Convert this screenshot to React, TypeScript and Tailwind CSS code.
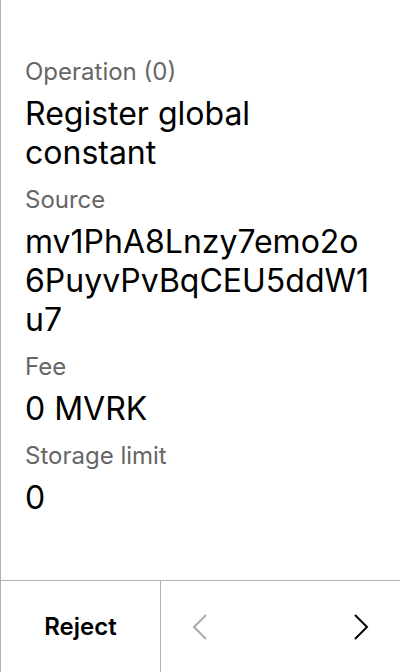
import React from "react";

const rows: { label: string; value: string }[] = [
  { label: "Operation (0)", value: "Register global constant" },
  { label: "Source", value: "mv1PhA8Lnzy7emo2o6PuyvPvBqCEU5ddW1u7" },
  { label: "Fee", value: "0 MVRK" },
  { label: "Storage limit", value: "0" },
];

const Chevron = ({ dir, className }: { dir: "left" | "right"; className: string }) => (
  <svg width="16" height="26" viewBox="0 0 16 26" fill="none" className={className}>
    <polyline
      points={dir === "left" ? "14,1 2,13 14,25" : "2,1 14,13 2,25"}
      stroke="currentColor"
      strokeWidth="2"
    />
  </svg>
);

export default function App() {
  return (
    <div
      className="flex h-[672px] w-[400px] flex-col border-l border-[#b0b0b0] bg-white text-black"
      style={{ fontFamily: "Inter, 'Noto Sans', sans-serif" }}
    >
      {/* contenu de l'opération */}
      <div className="flex-1 px-6 pt-[57px]">
        {rows.map((r) => (
          <div key={r.label} className="mb-[13px]">
            <div className="mb-2 text-[24px] leading-[29px] text-[#666666]">{r.label}</div>
            <div className="break-words text-[32px] leading-[39px]">{r.value}</div>
          </div>
        ))}
      </div>

      {/* barre du bas */}
      <div className="flex h-[92px] border-t border-[#b0b0b0]">
        <button className="flex w-[160px] items-center justify-center border-r border-[#b0b0b0] text-[24px] font-semibold">
          Reject
        </button>
        <div className="flex flex-1 items-center justify-between px-[31px]">
          <Chevron dir="left" className="text-[#aaaaaa]" />
          <Chevron dir="right" className="text-black" />
        </div>
      </div>
    </div>
  );
}
